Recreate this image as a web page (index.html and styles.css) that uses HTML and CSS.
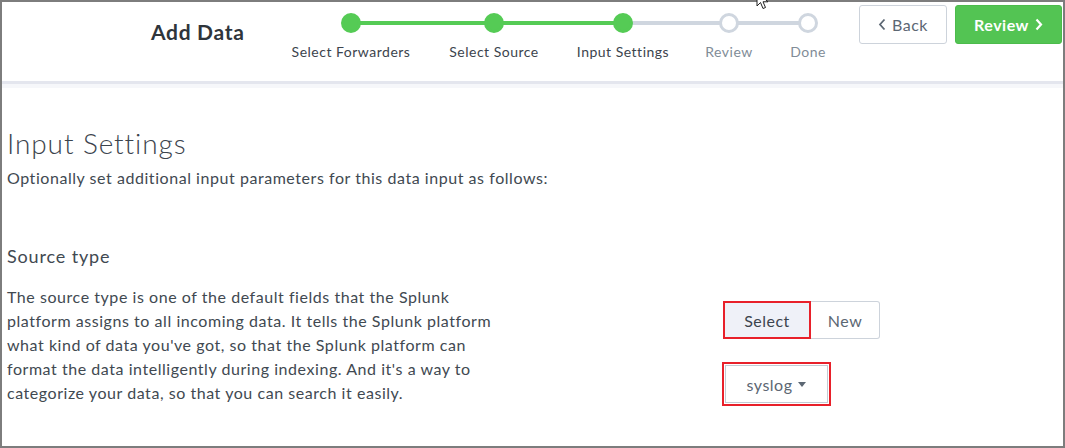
FILE: index.html
```html
<!DOCTYPE html>
<html lang="en">
<head>
<meta charset="utf-8">
<title>Add Data - Input Settings</title>
<link rel="stylesheet" href="styles.css">
</head>
<body>
<div class="frame">
  <header class="header">
    <div class="title">Add Data</div>
    <ol class="steps">
      <li class="step done next-done"><span class="dot"></span><span class="label">Select Forwarders</span></li>
      <li class="step done next-done"><span class="dot"></span><span class="label">Select Source</span></li>
      <li class="step done"><span class="dot"></span><span class="label">Input Settings</span></li>
      <li class="step"><span class="dot"></span><span class="label">Review</span></li>
      <li class="step last"><span class="dot"></span><span class="label">Done</span></li>
    </ol>
    <div class="actions">
      <button class="btn btn-back"><svg class="chev" width="8" height="13" viewBox="0 0 8 13"><path d="M6.5 1.5 L2 6.5 L6.5 11.5" fill="none" stroke="currentColor" stroke-width="1.8"/></svg>Back</button>
      <button class="btn btn-review">Review<svg class="chev" width="8" height="13" viewBox="0 0 8 13"><path d="M1.5 1.5 L6 6.5 L1.5 11.5" fill="none" stroke="currentColor" stroke-width="2.2"/></svg></button>
    </div>
  </header>
  <div class="strip"></div>
  <main class="content">
    <h1 class="page-title">Input Settings</h1>
    <p class="intro">Optionally set additional input parameters for this data input as follows:</p>
    <h2 class="section-title">Source type</h2>
    <div class="section">
      <p class="desc">The source type is one of the default fields that the Splunk platform assigns to all incoming data. It tells the Splunk platform what kind of data you've got, so that the Splunk platform can format the data intelligently during indexing. And it's a way to categorize your data, so that you can search it easily.</p>
      <div class="controls">
        <div class="toggle">
          <button class="seg seg-active">Select</button>
          <button class="seg seg-new">New</button>
        </div>
        <div class="highlight">
          <button class="dropdown">syslog<span class="caret"></span></button>
        </div>
      </div>
    </div>
  </main>
</div>
<svg class="cursor" width="14" height="20" viewBox="0 0 14 20"><path d="M1 1 L1 15 L4.5 11.5 L7 17.5 L9.5 16.5 L7 10.8 L12 10.8 Z" fill="#fff" stroke="#222" stroke-width="1"/></svg>
</body>
</html>
```
FILE: styles.css
```css
* { box-sizing: border-box; }
html, body { margin: 0; padding: 0; background: #fff; }
body { font-family: Lato, "Open Sans", sans-serif; color: #414951; letter-spacing: 0.55px; }

.frame {
  width: 1065px;
  height: 448px;
  border: 2px solid #7d7d7d;
  overflow: hidden;
  background: #fff;
}

.cursor {
  position: absolute;
  left: 756px;
  top: -9px;
}

.header {
  display: grid;
  grid-template-columns: 271px 572px 1fr;
  height: 82px;
  border-bottom: 3px solid #e4e6ee;
}
.strip { height: 4px; background: #f6f7fa; }

.title {
  padding: 17px 0 0 149px;
  font-size: 21px;
  line-height: 26px;
  font-weight: 700;
  letter-spacing: 0.7px;
  color: #2f353b;
}

.steps {
  list-style: none;
  margin: 0;
  padding: 0;
  display: grid;
  grid-template-columns: 156px 130px 128px 84px 74px;
}
.step {
  position: relative;
  display: flex;
  flex-direction: column;
  align-items: center;
  padding-top: 11px;
}
.step::after {
  content: "";
  position: absolute;
  top: 19px;
  left: 50%;
  right: -50%;
  height: 4px;
  background: #cfd6df;
}
.steps .step:nth-child(4)::after { right: -40px; }
.step.next-done::after { background: #55cb55; }
.step.last::after { display: none; }
.dot {
  position: relative;
  z-index: 1;
  width: 20px;
  height: 20px;
  border-radius: 50%;
  background: #fff;
  border: 3px solid #cfd6df;
}
.step.done .dot { background: #55cb55; border-color: #55cb55; }
.label {
  margin-top: 10px;
  font-size: 14px;
  line-height: 18px;
  letter-spacing: 0.5px;
  color: #818c97;
  white-space: nowrap;
}
.step.done .label { color: #3c444d; }

.actions {
  display: flex;
  justify-content: flex-end;
  align-items: flex-start;
  gap: 8px;
  padding: 3px 1px 0 0;
}
.btn {
  height: 39px;
  border-radius: 3px;
  font-family: inherit;
  font-size: 16px;
  letter-spacing: 0.5px;
  display: inline-flex;
  align-items: center;
  justify-content: center;
  gap: 6px;
  cursor: pointer;
}
.btn-back {
  width: 88px;
  background: #fff;
  border: 1px solid #cdd3db;
  color: #5c6773;
}
.btn-review {
  width: 107px;
  background: #53c453;
  border: 1px solid #4cbb4c;
  color: #fff;
  font-weight: 700;
}
.chev { display: block; }

.content { padding: 0 0 0 5px; }
.page-title {
  margin: 38px 0 0;
  font-size: 28px;
  line-height: 34px;
  font-weight: 300;
  letter-spacing: 0.9px;
  color: #3c444d;
}
.intro {
  margin: 6px 0 0;
  font-size: 16px;
  line-height: 24px;
}
.section-title {
  margin: 54px 0 0;
  font-size: 18px;
  line-height: 24px;
  font-weight: 400;
  letter-spacing: 0.85px;
}
.section {
  display: flex;
  margin-top: 17px;
}
.desc {
  margin: 0;
  width: 500px;
  font-size: 16px;
  line-height: 24px;
}
.controls {
  margin-left: 216px;
  padding-top: 16px;
  display: flex;
  flex-direction: column;
  align-items: flex-start;
}
.toggle { display: flex; }
.seg {
  height: 38px;
  font-family: inherit;
  font-size: 16px;
  letter-spacing: 0.5px;
  color: #3c444d;
  background: #fff;
  border: 1px solid #cdd3db;
}
.seg-active {
  width: 88px;
  background: #eff1f8;
  border: 2px solid #e8202a;
}
.seg-new {
  width: 69px;
  border-left: none;
  border-radius: 0 3px 3px 0;
  color: #5c6773;
}
.highlight {
  margin-top: 23px;
  margin-left: -1px;
  border: 2px solid #e8202a;
  padding: 1px;
}
.dropdown {
  width: 103px;
  height: 38px;
  background: #fff;
  border: 1px solid #c3cbd4;
  font-family: inherit;
  font-size: 16px;
  letter-spacing: 0.5px;
  color: #5c6773;
  display: flex;
  align-items: center;
  justify-content: center;
  gap: 6px;
}
.caret {
  width: 0;
  height: 0;
  border-left: 4px solid transparent;
  border-right: 4px solid transparent;
  border-top: 5px solid #5c6773;
}
```
